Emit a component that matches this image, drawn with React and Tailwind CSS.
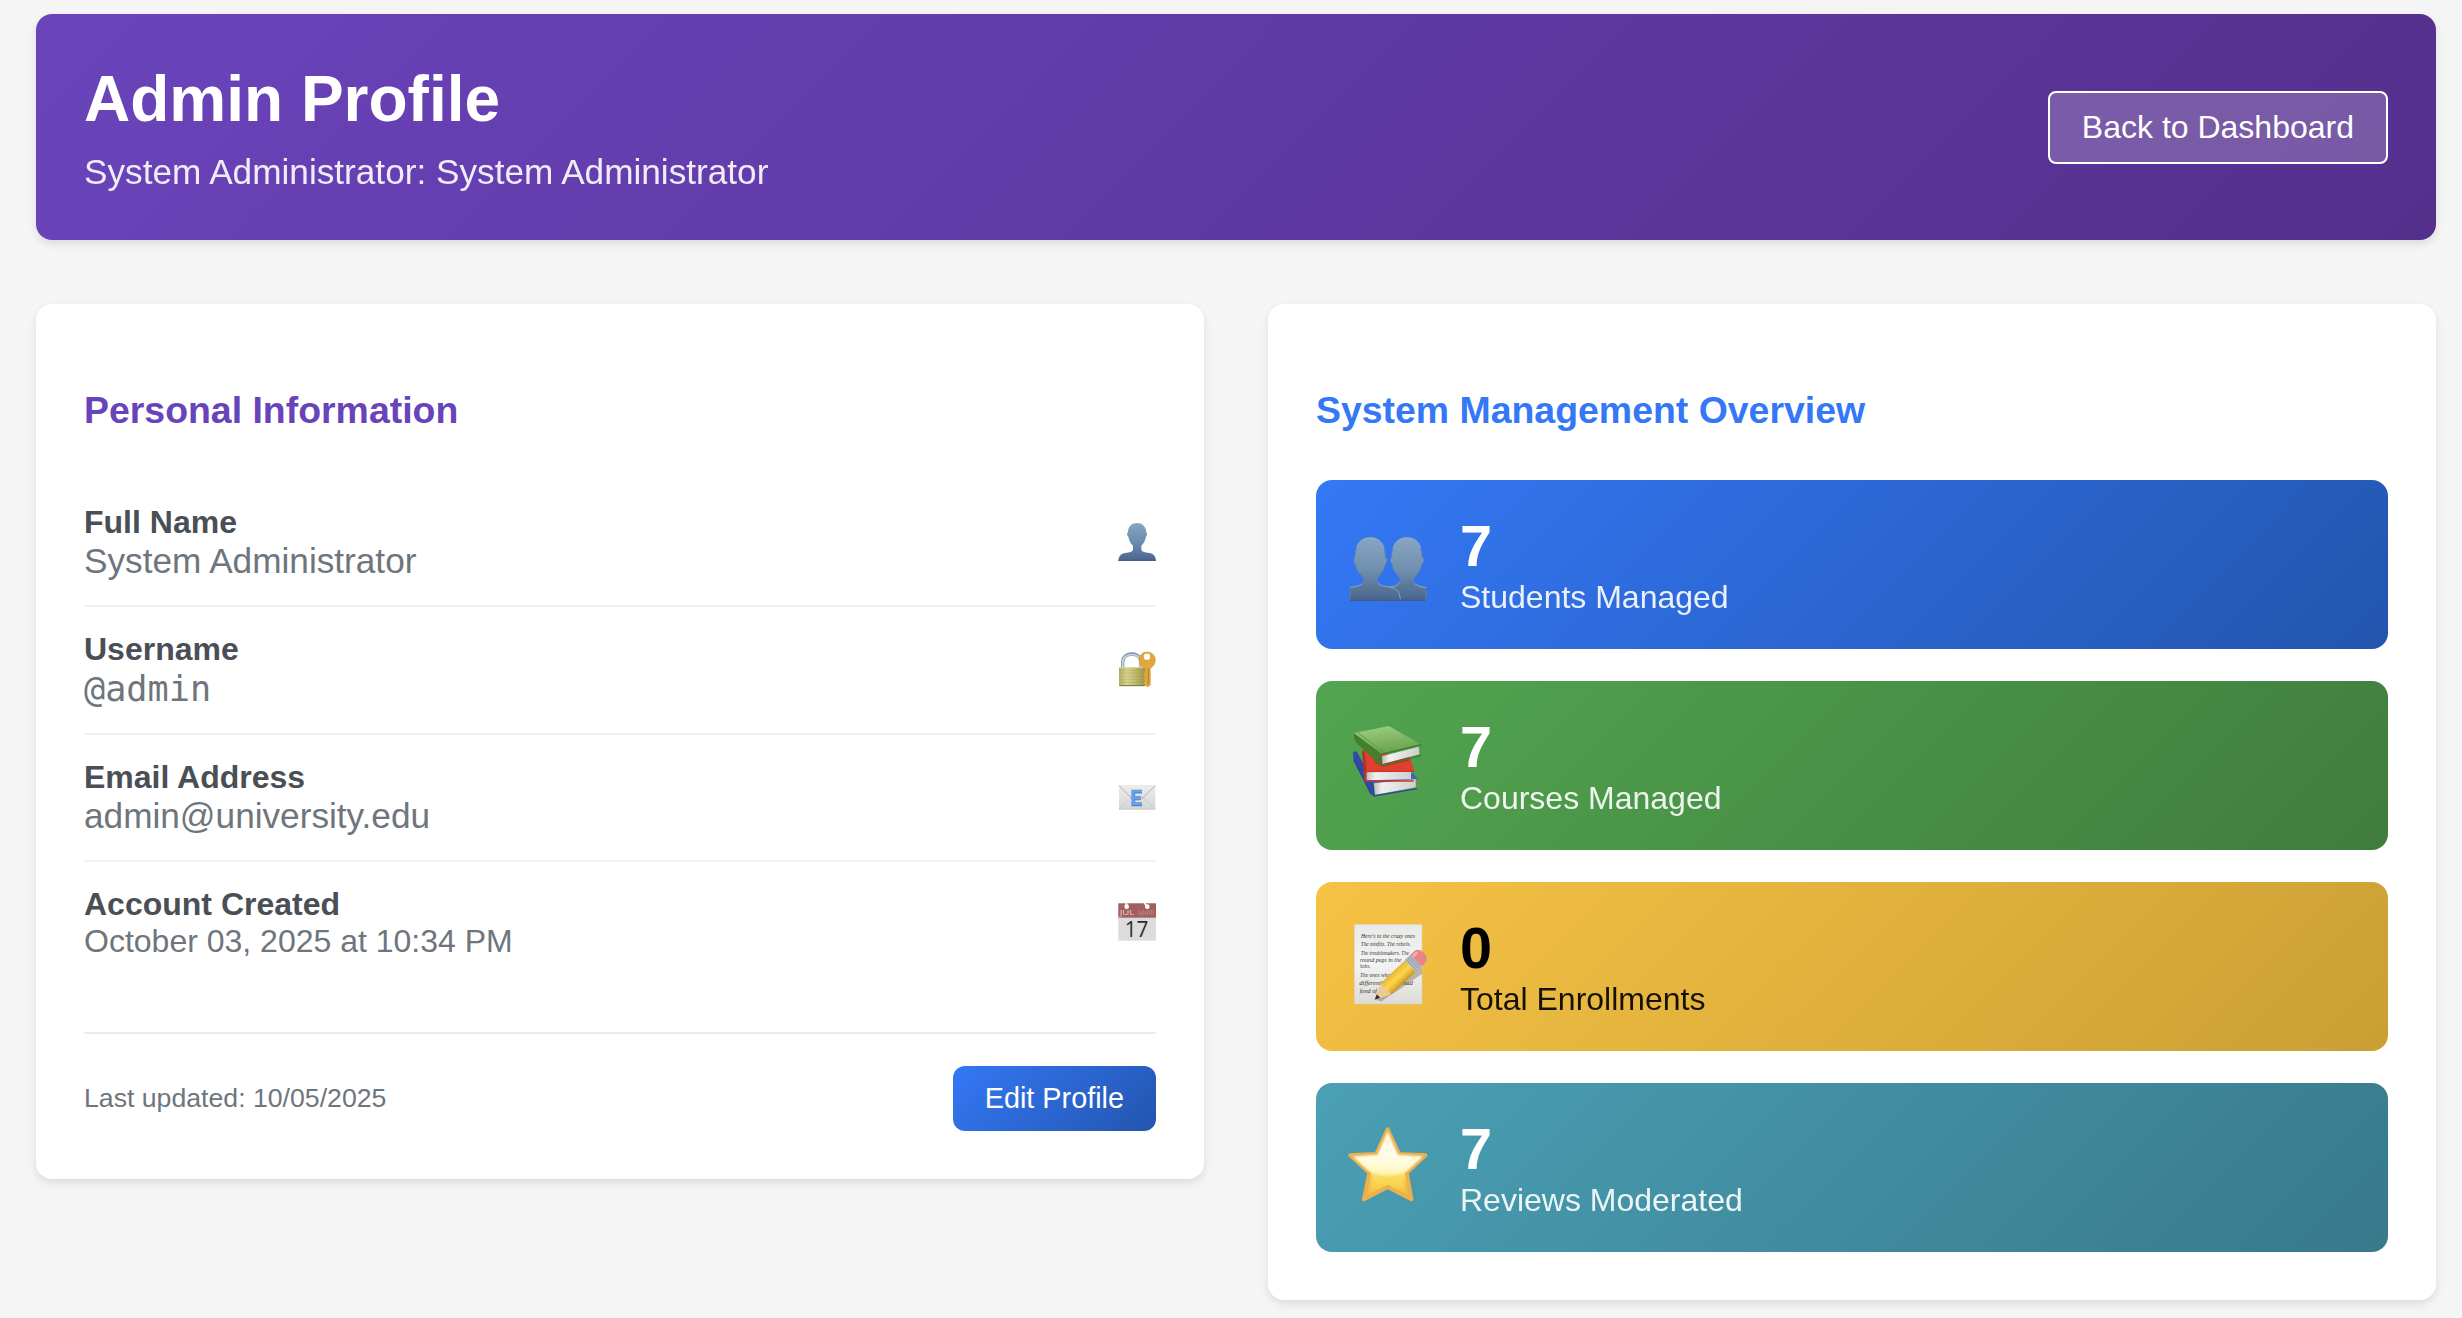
const sans = "font-['Liberation_Sans',Arial,sans-serif]";

function UserIcon() {
  return (
    <svg width="38" height="39" viewBox="84 69 114 117" aria-hidden="true">
      <defs>
        <linearGradient id="user-fill" x1="0" y1="0" x2="0" y2="1">
          <stop offset="0" stopColor="#86a6c2" />
          <stop offset="0.6" stopColor="#6486ab" />
          <stop offset="1" stopColor="#4b668f" />
        </linearGradient>
      </defs>
      <path
        d="M141 69C156 69 168 79 169 97C172 99 172 107 168 110C166 122 160 131 154 137V149C156 157 170 157 182 160C192 163 197 170 198 182H85C86 170 91 163 101 160C113 157 127 157 129 149V137C122 131 117 122 115 110C110 107 110 99 114 97C114 79 126 69 141 69Z"
        fill="url(#user-fill)"
      />
      <path d="M85 181H198" stroke="#3f5679" strokeWidth="3" />
    </svg>
  );
}

function LockIcon() {
  return (
    <svg width="38" height="40" viewBox="84 450 114 120" aria-hidden="true">
      <defs>
        <linearGradient id="lock-body" x1="0" y1="0" x2="1" y2="0">
          <stop offset="0" stopColor="#b3af60" />
          <stop offset="0.3" stopColor="#d6d292" />
          <stop offset="0.55" stopColor="#c6c178" />
          <stop offset="1" stopColor="#9b974b" />
        </linearGradient>
      </defs>
      <path d="M98 504V486C98 454 153 454 153 486V504" fill="none" stroke="#7e8ea4" strokeWidth="10" />
      <path d="M98 504V486C98 456 153 456 153 486V504" fill="none" stroke="#c9d6e6" strokeWidth="5" />
      <rect x="87" y="501" width="78" height="57" rx="3" fill="url(#lock-body)" />
      <path d="M88 511H164M88 520H164M88 529H164M88 538H164M88 547H164" stroke="#8c8940" strokeOpacity="0.3" strokeWidth="2" />
      <path d="M88 502.500H164" stroke="#e4e1ab" strokeWidth="2" />
      <path d="M88 557H164" stroke="#77733a" strokeWidth="3" />
      <path
        fillRule="evenodd"
        d="M171 456C185 456 196 466 196 480C196 492 189 501 181 504V555L173 561L165 555L160 549L165 543L160 536L165 530L160 522L165 515V504C155 501 147 492 147 480C147 466 158 456 171 456ZM171 460A10 10 0 1 0 171 480A10 10 0 1 0 171 460Z"
        fill="#dfa83d"
        stroke="#c98f2c"
        strokeWidth="1.500"
      />
      <circle cx="171" cy="470" r="9" fill="#fff" />
      <path d="M175 506V554" stroke="#b87d22" strokeWidth="3" />
    </svg>
  );
}

function MailIcon() {
  return (
    <svg width="38" height="39" viewBox="84 834 114 117" aria-hidden="true">
      <defs>
        <linearGradient id="mail-fill" x1="0" y1="0" x2="0" y2="1">
          <stop offset="0" stopColor="#ececec" />
          <stop offset="1" stopColor="#d6d6d6" />
        </linearGradient>
      </defs>
      <rect x="87" y="855" width="109" height="73" fill="url(#mail-fill)" />
      <path d="M87 927L128 890M196 927L155 890" stroke="#c2c2c2" strokeWidth="2" />
      <path d="M87 857L124 894Q141 908 158 894L196 857" fill="none" stroke="#b0b0b0" strokeWidth="3" />
      <path d="M87 927.500H196" stroke="#bcbcbc" strokeWidth="2" />
      <path d="M156 875H130V913H156M130 894H152" fill="none" stroke="#4a78b8" strokeWidth="11" />
      <path d="M156 874H130V912H156M130 893H152" fill="none" stroke="#62a2f3" strokeWidth="7.500" />
    </svg>
  );
}

function CalendarIcon() {
  return (
    <svg width="38" height="40" viewBox="84 1209 114 120" aria-hidden="true">
      <rect x="85" y="1210" width="113" height="112" fill="#dcdcdc" />
      <rect x="85" y="1210" width="113" height="43" fill="#a35f60" />
      <path d="M148 1232V1246M154 1234V1246M160 1231V1246M166 1233V1245M172 1231V1245M178 1230V1244M184 1229V1244M190 1228V1243" stroke="#b98282" strokeWidth="3" />
      <path d="M109 1209V1220M163 1209L172 1220" stroke="#fff" strokeWidth="5" />
      <circle cx="110" cy="1220" r="7" fill="#fff" />
      <circle cx="172" cy="1220" r="7" fill="#fff" />
      <text x="89" y="1246" fontSize="23" fill="#e6cfcf" textLength="44" lengthAdjust="spacingAndGlyphs" className="font-['Open_Sans',sans-serif]">JUL</text>
      <text x="104" y="1310" fontSize="66" fill="#2b2b2b" textLength="71" lengthAdjust="spacingAndGlyphs" className="font-['Open_Sans',sans-serif]">17</text>
    </svg>
  );
}

function StudentsIcon() {
  return (
    <svg width="80" height="105" viewBox="54 36 240 315" aria-hidden="true">
      <defs>
        <linearGradient id="bust-fill" x1="0" y1="112" x2="0" y2="302" gradientUnits="userSpaceOnUse">
          <stop offset="0" stopColor="#88a6c3" />
          <stop offset="0.5" stopColor="#7190af" />
          <stop offset="1" stopColor="#49648c" />
        </linearGradient>
      </defs>
      <path
        d="M231 112C258 112 274 128 276 172C283 174 282 188 275 193C272 212 264 220 254 231C249 238 250 246 255 250C263 259 275 260 288 262V302H150V262C180 260 198 259 206 250C211 244 212 237 207 230C196 218 189 211 187 193C180 188 180 176 185 172C187 128 204 112 231 112Z"
        fill="url(#bust-fill)"
        stroke="#6688a8"
        strokeWidth="2"
      />
      <path
        d="M121 112C148 112 164 128 166 172C173 174 172 188 165 193C162 212 152 222 145 231C140 238 141 246 146 251C156 262 176 261 190 265C204 270 210 282 211 302H60V262C75 260 87 259 96 250C101 244 102 237 98 230C87 218 79 211 77 193C70 188 70 176 75 172C77 128 94 112 121 112Z"
        fill="url(#bust-fill)"
        stroke="#6688a8"
        strokeWidth="2"
      />
      <path
        d="M80 144C88 104 154 104 162 144M190 144C198 104 264 104 272 144M143 247C154 262 178 259 190 264C204 270 210 282 211 297M180 262Q202 260 208 248M60 262Q86 260 95 251M255 252Q266 261 288 263"
        fill="none"
        stroke="#92b7cf"
        strokeWidth="2"
      />
      <path d="M60 301H288" stroke="#3d5680" strokeWidth="3" />
    </svg>
  );
}

function BooksIcon() {
  return (
    <svg width="80" height="105" viewBox="54 39 240 315" aria-hidden="true">
      <defs>
        <linearGradient id="book-green" x1="0" y1="0" x2="0.300" y2="1">
          <stop offset="0" stopColor="#a3cf86" />
          <stop offset="1" stopColor="#68a54c" />
        </linearGradient>
        <linearGradient id="book-pages" x1="0" y1="0" x2="1" y2="0">
          <stop offset="0" stopColor="#bdbdbd" />
          <stop offset="0.200" stopColor="#f0f0f0" />
          <stop offset="1" stopColor="#cfcfcf" />
        </linearGradient>
      </defs>
      <path d="M69 156L80 154L128 243L131 289L122 282L71 182Z" fill="#3248a8" />
      <path d="M71 180L122 282" stroke="#263a86" strokeWidth="2" />
      <path d="M120 242L250 220L263 237L131 250Z" fill="#4560c4" />
      <path d="M131 250L257 238V262L136 284Z" fill="url(#book-pages)" />
      <path d="M128 247L132 288L262 266" fill="none" stroke="#2c46a8" strokeWidth="4" />
      <path d="M97 151L240 172L253 214H108Z" fill="#dd4030" />
      <path d="M96 150L104 156L110 215V243L103 238Z" fill="#b92f25" />
      <path d="M109 217L243 215V238L110 241Z" fill="url(#book-pages)" />
      <path d="M253 214H108L105 243H251" fill="none" stroke="#cc3427" strokeWidth="4" />
      <path d="M130 184L155 200L238 182L236 172L155 178Z" fill="#7f2119" opacity="0.400" />
      <path d="M72 100L151 158L153 198L78 127Q70 115 72 100Z" fill="#437f2d" />
      <path d="M72 99L177 78L274 134L156 162Z" fill="url(#book-green)" />
      <path d="M83 98L163 158" stroke="#5b9a41" strokeWidth="3" />
      <path d="M156 169L266 140L268 163L157 192Z" fill="url(#book-pages)" />
      <path d="M274 134L156 162Q149 180 153 197L274 166" fill="none" stroke="#3f7d2b" strokeWidth="4" />
    </svg>
  );
}

function MemoIcon() {
  const lines = [
    { x: 93, y: 114, w: 162, t: "Here's to the crazy ones" },
    { x: 92, y: 139, w: 150, t: "The misfits. The rebels." },
    { x: 92, y: 165, w: 145, t: "The troublemakers. The" },
    { x: 90, y: 186, w: 125, t: "round pegs in the" },
    { x: 90, y: 205, w: 31, t: "holes." },
    { x: 90, y: 231, w: 90, t: "The ones who" },
    { x: 88, y: 254, w: 160, t: "differently. They had" },
    { x: 89, y: 280, w: 52, t: "fond of" },
  ];
  return (
    <svg width="80" height="105" viewBox="54 42 240 315" aria-hidden="true">
      <defs>
        <linearGradient id="memo-paper" x1="0" y1="0" x2="0" y2="1">
          <stop offset="0" stopColor="#e9e9e7" />
          <stop offset="0.500" stopColor="#f3f3f3" />
          <stop offset="1" stopColor="#dcdbd8" />
        </linearGradient>
        <linearGradient id="memo-pencil" x1="0" y1="0" x2="0" y2="1">
          <stop offset="0" stopColor="#e3b232" />
          <stop offset="0.400" stopColor="#fbd84b" />
          <stop offset="0.700" stopColor="#f3c63c" />
          <stop offset="1" stopColor="#c9941f" />
        </linearGradient>
      </defs>
      <rect x="73" y="73" width="203" height="239" fill="url(#memo-paper)" stroke="#d6cfba" strokeWidth="1.500" />
      {lines.map((l) => (
        <text key={l.y} x={l.x} y={l.y} fontSize="21" fontStyle="italic" fill="#333" textLength={l.w} lengthAdjust="spacingAndGlyphs" className="font-['Liberation_Serif',serif]">
          {l.t}
        </text>
      ))}
      <path d="M138 300L276 199L276 222L155 304Z" fill="#6b6040" opacity="0.400" />
      <g transform="translate(134 299) rotate(-43.500)">
        <path d="M0 0L48 -23V23Z" fill="#eccb92" />
        <path d="M0 0L16 -7.500V7.500Z" fill="#2f2f2f" />
        <path d="M45 -23H148V23H45Q53 15 46 8Q53 0 46 -8Q53 -15 45 -23Z" fill="url(#memo-pencil)" />
        <path d="M50 -8H148M50 9H148" stroke="#d1a02a" strokeWidth="1.500" opacity="0.600" />
        <rect x="147" y="-24" width="25" height="48" fill="#b3bac3" />
        <path d="M152 -24V24M159 -24V24M166 -24V24" stroke="#818b98" strokeWidth="2" />
        <path d="M171 -24H186Q204 -22 204 0Q204 22 186 24H171Z" fill="#e8858c" />
        <path d="M175 -15H188" stroke="#f4adb1" strokeWidth="8" strokeLinecap="round" />
      </g>
    </svg>
  );
}

function StarIcon() {
  return (
    <svg width="80" height="105" viewBox="54 45 240 315" aria-hidden="true">
      <defs>
        <linearGradient id="star-fill" x1="0" y1="82" x2="0" y2="305" gradientUnits="userSpaceOnUse">
          <stop offset="0" stopColor="#fbd98a" />
          <stop offset="0.550" stopColor="#fbe07a" />
          <stop offset="0.750" stopColor="#f9d74f" />
          <stop offset="1" stopColor="#eda93c" />
        </linearGradient>
        <linearGradient id="star-shine" x1="0" y1="90" x2="0" y2="228" gradientUnits="userSpaceOnUse">
          <stop offset="0" stopColor="#fff6d8" />
          <stop offset="0.500" stopColor="#fffdee" />
          <stop offset="0.800" stopColor="#fffad2" />
          <stop offset="1" stopColor="#fdf0a4" />
        </linearGradient>
        <clipPath id="star-clip">
          <path d="M173 88L207 160L286 166L230 218L245 297L173 261L102 297L118 218L61 166L139 160Z" />
        </clipPath>
        <filter id="star-soft" x="-10%" y="-10%" width="120%" height="120%">
          <feGaussianBlur stdDeviation="3.500" />
        </filter>
      </defs>
      <path
        d="M173 88L207 162L286 166L230 218L244 298L173 261L102 298L118 218L61 166L139 162Z"
        fill="url(#star-fill)"
        stroke="#eeb04e"
        strokeWidth="12"
        strokeLinejoin="round"
      />
      <g clipPath="url(#star-clip)">
        <path d="M173 96L202 166L276 171L229 214Q205 226 173 226Q141 226 118 214L71 171L144 166Z" fill="url(#star-shine)" stroke="url(#star-shine)" strokeWidth="3" filter="url(#star-soft)" />
      </g>
      <path d="M111 285L124 234M236 285L222 234" stroke="#f0a53a" strokeWidth="8" opacity="0.450" filter="url(#star-soft)" />
    </svg>
  );
}

const fields = [
  { label: "Full Name", value: "System Administrator", valueClass: "text-[35.2px] leading-[39px] pb-px", Icon: UserIcon },
  { label: "Username", value: "@admin", valueClass: "font-['DejaVu_Sans_Mono',monospace] text-[35.2px] leading-[41px]", Icon: LockIcon },
  { label: "Email Address", value: "admin@university.edu", valueClass: "text-[35.2px] leading-[39px] pb-px", Icon: MailIcon },
  { label: "Account Created", value: "October 03, 2025 at 10:34 PM", valueClass: "text-[32px] leading-[36px] pb-px", Icon: CalendarIcon },
];

const stats = [
  { value: "7", label: "Students Managed", Icon: StudentsIcon, tone: "from-[#3478f6] to-[#2355ae] text-white" },
  { value: "7", label: "Courses Managed", Icon: BooksIcon, tone: "from-[#52a550] to-[#3f7d3d] text-white" },
  { value: "0", label: "Total Enrollments", Icon: MemoIcon, tone: "from-[#f6c244] to-[#c99f34] text-black" },
  { value: "7", label: "Reviews Moderated", Icon: StarIcon, tone: "from-[#4aa0b5] to-[#38798a] text-white" },
];

export default function App() {
  return (
    <div className={`h-[1318px] w-[2462px] overflow-hidden bg-[#f5f5f5] pr-[26px] pl-9 pt-3.5 ${sans}`}>
      <header className="flex h-[226px] items-center justify-between rounded-2xl bg-linear-[135deg] from-[#6a44bb] to-[#552f8c] px-12 text-white shadow-[0_4px_8px_rgba(0,0,0,0.1)]">
        <div>
          <h1 className="text-[64px] leading-[74px] font-bold">Admin Profile</h1>
          <p className="mt-4 pb-px text-[35.2px] leading-[39px] opacity-90">System Administrator: System Administrator</p>
        </div>
        <button className="h-[73px] rounded-lg border-2 border-white bg-white/20 px-8 text-[32px] leading-[36px]">
          Back to Dashboard
        </button>
      </header>

      <main className="mt-16 grid grid-cols-2 items-start gap-16">
        <section className="rounded-2xl bg-white p-12 shadow-[0_4px_8px_rgba(0,0,0,0.1)]">
          <h2 className="mt-[37px] pb-px text-[37.44px] leading-[42px] font-bold text-[#6943ba]">Personal Information</h2>
          <div className="mt-12">
            {fields.map(({ label, value, valueClass, Icon }) => (
              <div key={label} className="flex items-center justify-between border-b-2 border-[#f1f1f2] py-6 last:border-b-0">
                <div>
                  <div className="mb-px text-[32px] leading-[36px] font-bold text-[#4a4f56]">{label}</div>
                  <div className={`text-[#6e757c] ${valueClass}`}>{value}</div>
                </div>
                <Icon />
              </div>
            ))}
          </div>
          <div className="mt-12 flex items-center justify-between border-t-2 border-[#e9ebee] pt-8">
            <span className="pb-px text-[26.67px] leading-[31px] text-[#6e757c]">Last updated: 10/05/2025</span>
            <button className="h-[65px] rounded-xl bg-linear-[135deg] from-[#3478f6] to-[#2355ae] px-8 text-[28.8px] leading-[33px] text-white">
              Edit Profile
            </button>
          </div>
        </section>

        <section className="rounded-2xl bg-white p-12 shadow-[0_4px_8px_rgba(0,0,0,0.1)]">
          <h2 className="mt-[37px] pb-px text-[37.44px] leading-[42px] font-bold text-[#3478f6]">System Management Overview</h2>
          <div className="mt-12 flex flex-col gap-8">
            {stats.map(({ value, label, Icon, tone }) => (
              <div key={label} className={`flex h-[169px] items-center gap-8 rounded-2xl bg-linear-[135deg] p-8 ${tone}`}>
                <Icon />
                <div className="pb-0.5">
                  <div className="text-[57.6px] leading-[66px] font-bold">{value}</div>
                  <div className="text-[32px] leading-[36px] opacity-90">{label}</div>
                </div>
              </div>
            ))}
          </div>
        </section>
      </main>
    </div>
  );
}
